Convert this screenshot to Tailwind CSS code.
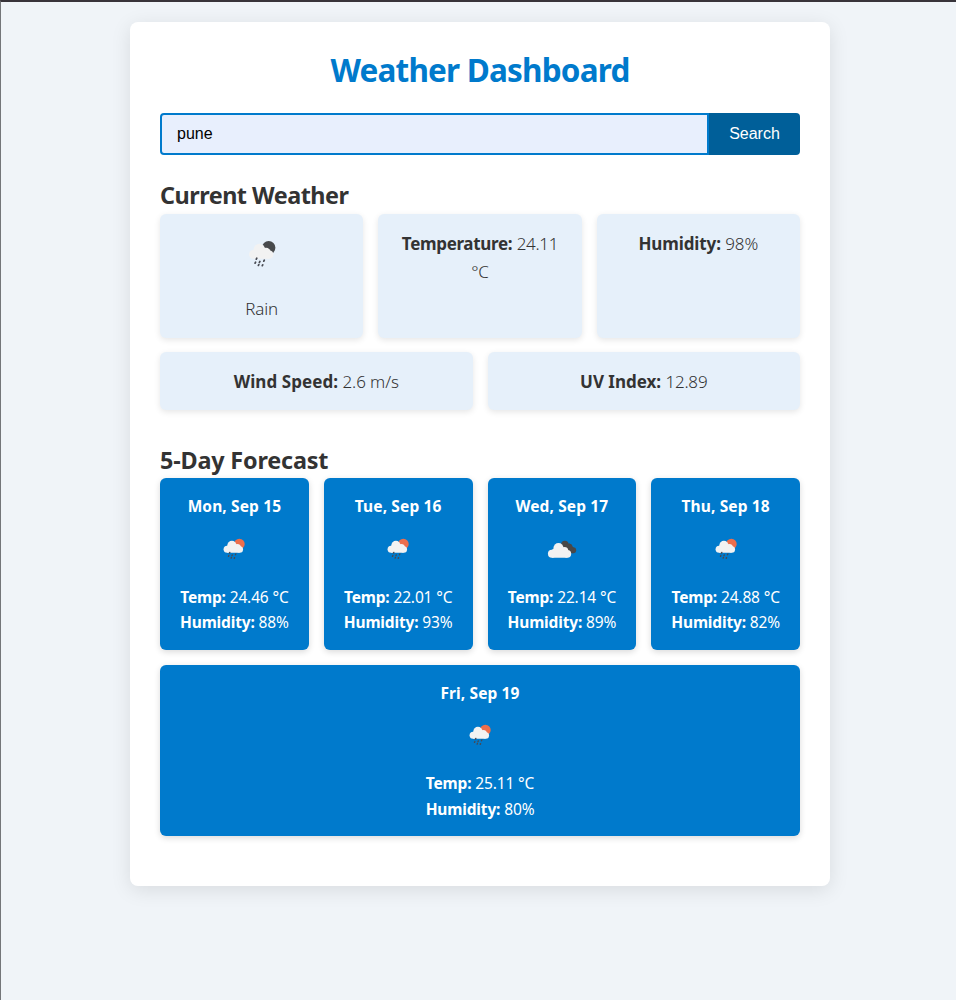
<!DOCTYPE html>
<html lang="en">
<head>
<meta charset="utf-8">
<title>Weather Dashboard</title>
<script src="https://cdn.jsdelivr.net/npm/@tailwindcss/browser@4"></script>
</head>
<body class="h-[1000px] overflow-hidden border-t-2 border-l border-t-[#38343a] border-l-[#747679] bg-[#f0f4f8] pt-5 pl-[129px] font-['Noto_Sans',sans-serif] text-[#333]">
<svg class="hidden">
  <symbol id="rain" viewBox="0 0 50 50">
    <circle cx="31.7" cy="18.8" r="6.7" fill="currentColor"/>
    <g fill="#f2f2f2"><circle cx="22.4" cy="20.6" r="5.8"/><circle cx="16.4" cy="25.3" r="4.4"/><circle cx="29" cy="23.6" r="4.8"/><circle cx="32.2" cy="25.6" r="4.1"/><path d="M16.6 21h12.4l3 4v4.7h-15.6z"/></g>
    <path d="M19.8 29.2l-.5 1M18.6 33.2l-.5 1M22.9 32.4l-.5 1M27.3 31.2l-.5 1M21.8 35.6l-.4.8M25.7 35.8l-.4.9" stroke="#484a52" stroke-width="1.7" stroke-linecap="round"/>
  </symbol>
  <symbol id="clouds" viewBox="0 0 50 50">
    <g fill="#484848"><circle cx="28.6" cy="19.2" r="4.6"/><circle cx="34.2" cy="22.2" r="3.8"/><circle cx="39" cy="26.5" r="3.7"/><path d="M28.6 19l6-1 5.4 6-1 6.2h-8z"/></g>
    <g fill="#f2f2f2"><circle cx="20.6" cy="23.8" r="6.3"/><circle cx="12.4" cy="30.9" r="5"/><circle cx="28" cy="27.4" r="4.9"/><circle cx="31.6" cy="31" r="4.9"/><path d="M12.4 26l3-2h12l4.4 6v5.9h-19.4z"/></g>
  </symbol>
</svg>
<main class="h-[864px] w-[700px] rounded-lg bg-white px-[30px] pt-[27px] shadow-[0_4px_20px_rgba(0,0,0,0.1)]">
  <h1 class="h-[64px] text-center text-[31.5px] leading-[41px] font-bold tracking-[-0.8px] text-[#007acc]">Weather Dashboard</h1>
  <form class="flex h-[42px] font-['Liberation_Sans',sans-serif] text-base">
    <input class="w-[549px] rounded-l border-2 border-[#007acc] bg-[#e8effd] px-[15px] text-black outline-none" value="pune">
    <button type="button" class="flex-1 rounded-r bg-[#005f99] text-white">Search</button>
  </form>

  <section class="pt-[23px]">
    <h2 class="h-[36px] text-[23.4px] leading-[35px] font-bold tracking-[-0.5px]">Current Weather</h2>
    <div class="flex flex-wrap gap-x-[15px] gap-y-[14.4px] text-center text-[17px] leading-[28.16px] *:rounded-md *:bg-[#e6f0fa] *:px-[15px] *:pt-4 *:shadow-[0_2px_6px_rgba(0,0,0,0.1)]">
      <div class="h-[123.6px] w-[203.33px]">
        <svg class="mx-auto -mt-px mb-4 size-[50px] text-[#484a4c]"><use href="#rain"/></svg>
        <p class="font-[350] tracking-[-0.15px]">Rain</p>
      </div>
      <div class="w-[203.33px] px-[20px]!"><b class="tracking-[-0.33px]">Temperature:</b> <span class="font-[350] tracking-[-0.3px]">24.11 °C</span></div>
      <div class="w-[203.33px]"><b class="tracking-[-0.12px]">Humidity:</b> <span class="font-[350] tracking-[-0.1px]">98%</span></div>
      <div class="h-[58.16px] w-[312.5px]"><b class="tracking-[0.07px]">Wind Speed:</b> <span class="font-[350] tracking-[-0.1px]">2.6 m/s</span></div>
      <div class="w-[312.5px]"><b class="tracking-[-0.03px]">UV Index:</b> <span class="font-[350] tracking-[-0.2px]">12.89</span></div>
    </div>
  </section>

  <section class="pt-[32.5px]">
    <h2 class="h-[35.4px] text-[23.4px] leading-[35px] font-bold tracking-[-0.18px]">5-Day Forecast</h2>
    <div class="flex flex-wrap gap-[15px] text-center text-[15.5px] leading-[25.6px] text-white *:h-[171.6px] *:rounded-md *:bg-[#007acc] *:px-[15px] *:pt-4 *:shadow-[0_2px_6px_rgba(0,0,0,0.15)]">
      <div class="w-[148.75px]">
        <p class="font-bold tracking-[0.12px]">Mon, Sep 15</p>
        <svg class="mx-auto mt-[9px] mb-4 size-10 text-[#ec6e4c]"><use href="#rain"/></svg>
        <p class="tracking-[-0.15px]"><b>Temp:</b> 24.46 °C</p>
        <p class="tracking-[-0.15px]"><b>Humidity:</b> 88%</p>
      </div>
      <div class="w-[148.75px]">
        <p class="font-bold tracking-[0.12px]">Tue, Sep 16</p>
        <svg class="mx-auto mt-[9px] mb-4 size-10 text-[#ec6e4c]"><use href="#rain"/></svg>
        <p class="tracking-[-0.15px]"><b>Temp:</b> 22.01 °C</p>
        <p class="tracking-[-0.15px]"><b>Humidity:</b> 93%</p>
      </div>
      <div class="w-[148.75px]">
        <p class="font-bold tracking-[0.12px]">Wed, Sep 17</p>
        <svg class="mx-auto mt-[9px] mb-4 size-10"><use href="#clouds"/></svg>
        <p class="tracking-[-0.15px]"><b>Temp:</b> 22.14 °C</p>
        <p class="tracking-[-0.15px]"><b>Humidity:</b> 89%</p>
      </div>
      <div class="w-[148.75px]">
        <p class="font-bold tracking-[0.12px]">Thu, Sep 18</p>
        <svg class="mx-auto mt-[9px] mb-4 size-10 text-[#ec6e4c]"><use href="#rain"/></svg>
        <p class="tracking-[-0.15px]"><b>Temp:</b> 24.88 °C</p>
        <p class="tracking-[-0.15px]"><b>Humidity:</b> 82%</p>
      </div>
      <div class="w-full">
        <p class="font-bold tracking-[0.12px]">Fri, Sep 19</p>
        <svg class="mx-auto mt-[9px] mb-4 size-10 text-[#ec6e4c]"><use href="#rain"/></svg>
        <p class="tracking-[-0.15px]"><b>Temp:</b> 25.11 °C</p>
        <p class="tracking-[-0.15px]"><b>Humidity:</b> 80%</p>
      </div>
    </div>
  </section>
</main>
</body>
</html>
